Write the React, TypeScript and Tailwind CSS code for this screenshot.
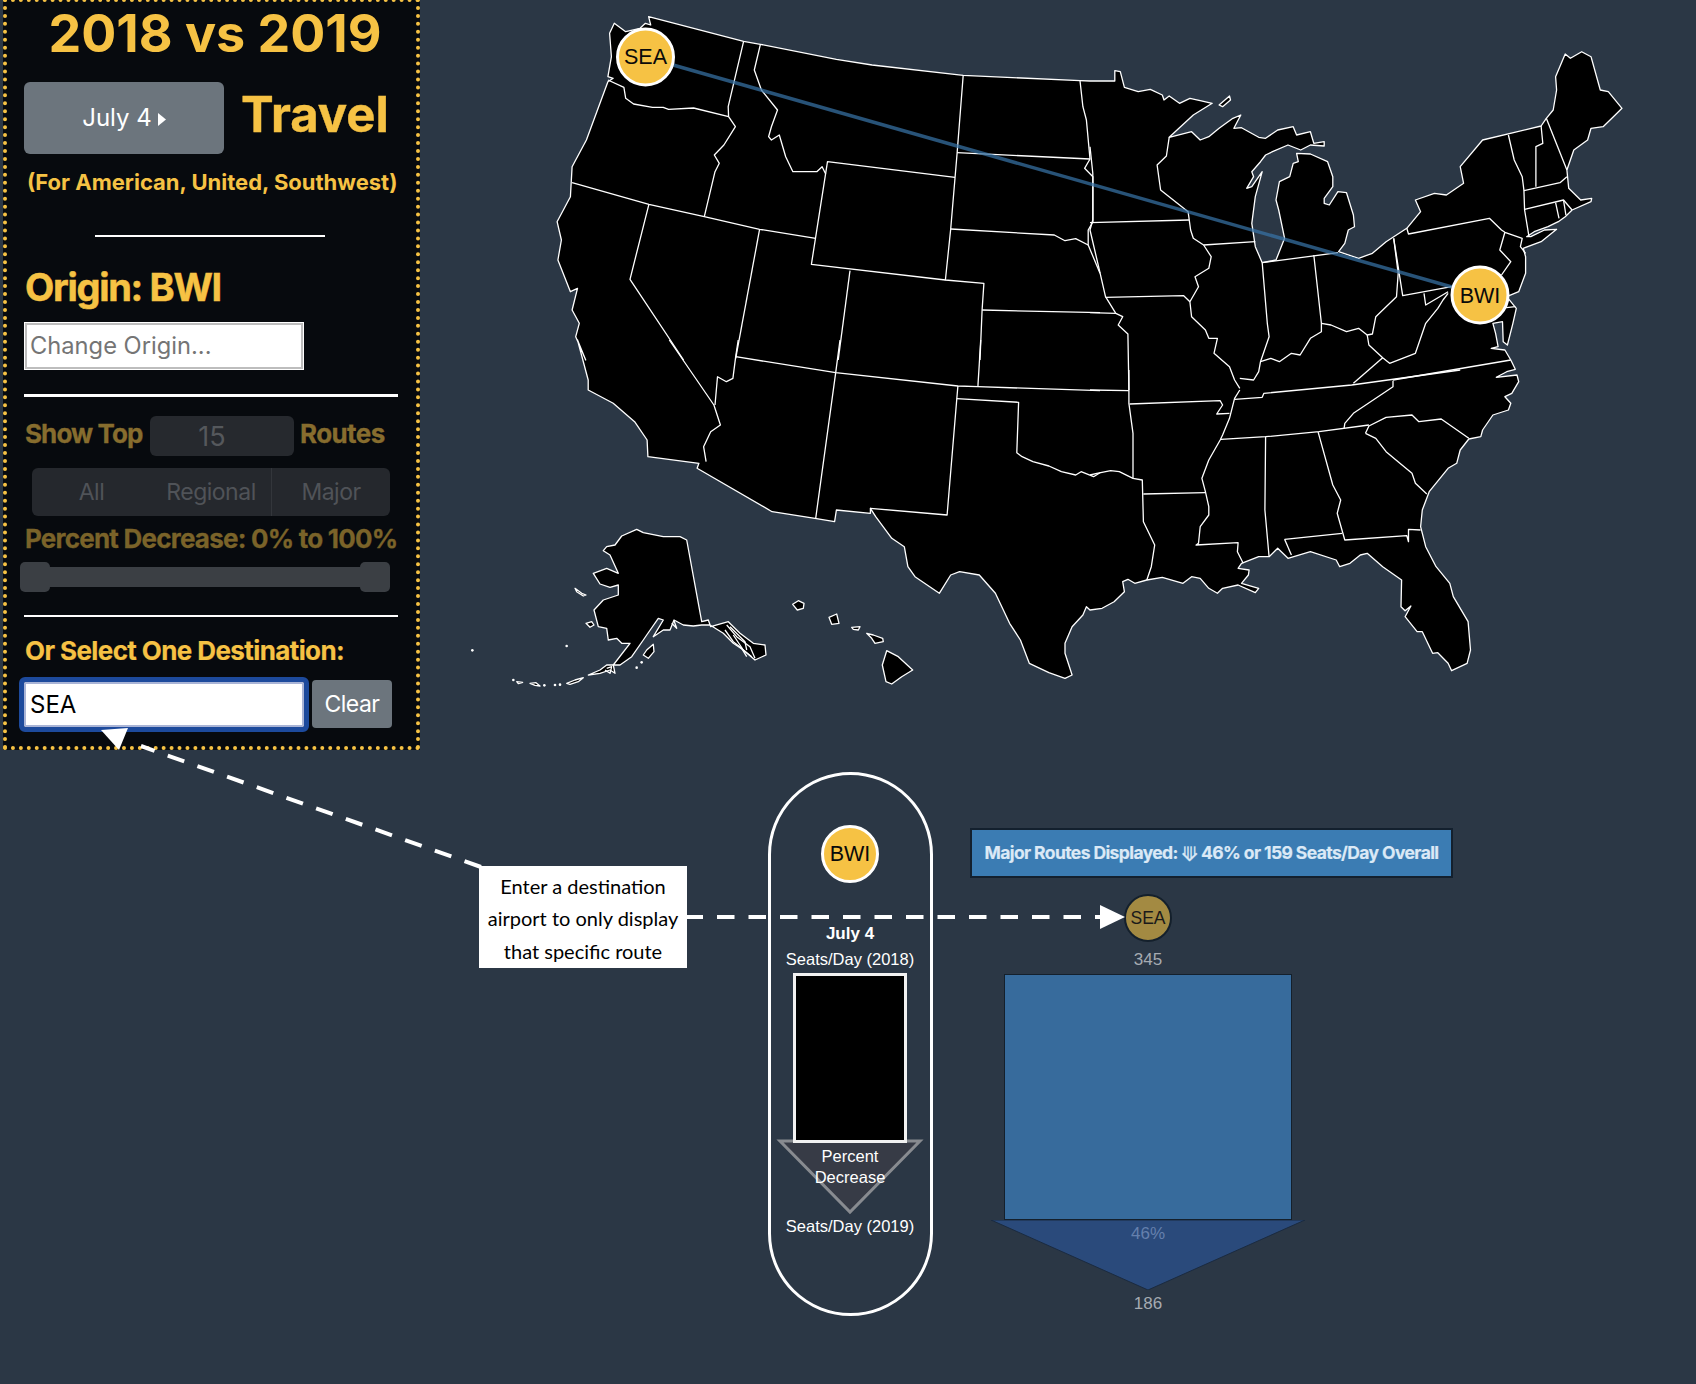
import React from "react";

type Pt = [number, number];
const conv = (s: string, x0: number, y0: number, sx: number, sy: number): string =>
  s
    .trim()
    .split(/\s+/)
    .map((p) => {
      const [x, y] = p.split(",").map(Number);
      return `${(x0 + x / sx).toFixed(1)},${(y0 + y / sy).toFixed(1)}`;
    })
    .join(" L");
const west = (s: string) => conv(s, 540, 0, 2.8, 3);
const south = (s: string) => conv(s, 540, 340, 2.8, 3);
const east = (s: string) => conv(s, 1090, 30, 2.904, 3);
const se = (s: string) => conv(s, 1090, 370, 2.904, 3);
const ak = (s: string) => conv(s, 450, 510, 3, 3);

const land =
  "M" +
  [
    west("304,50 570,124 617,133 830,178 930,195 1185,226 1512,242"),
    east(
      "0,153 72,153 72,122 88,125 100,172 140,185 175,178 210,195 215,210 230,198 260,220 290,205 320,212 355,220 300,255 230,322 295,305 320,330 345,320 375,295 415,265 438,255 418,295 440,293 490,322 510,325 545,300 590,290 600,315 640,305 650,340 680,335 680,348 640,345 612,360 575,345 530,365 510,375 495,395 470,425 475,440 455,475 470,470 500,425 480,500 470,580 480,650 500,698 540,690 565,625 548,540 540,510 550,455 580,440 590,400 605,395 600,370 640,372 690,395 705,440 705,470 680,505 680,520 695,525 720,485 745,488 765,555 768,590 750,600 740,640 722,665 780,685 820,670 860,635 880,622 920,595 960,545 945,510 1000,490 1035,495 1085,460 1075,410 1140,330 1310,288 1325,265 1345,240 1355,180 1352,140 1380,72 1395,85 1428,65 1455,80 1482,180 1505,185 1545,235 1520,260 1490,290 1455,295 1445,330 1405,360 1385,420 1390,475 1425,510 1457,505 1455,515 1400,540 1380,560 1360,575 1330,590 1290,605 1268,620 1280,620 1320,600 1355,598 1310,635 1258,655 1265,680 1265,730 1245,785 1210,800 1238,835 1228,880 1212,945 1200,935 1198,875 1170,880 1178,910 1185,950 1165,955 1205,960 1222,990 1235,1018 1210,1025 1180,1042"
    ),
    se(
      "1240,15 1245,35 1225,70 1205,80 1222,100 1215,120 1170,135 1140,180 1135,200 1100,207 1075,240 1065,280 1040,295 985,365 965,420 960,470 975,530 1005,590 1045,640 1055,680 1098,755 1105,840 1095,880 1050,902 1040,880 1010,848 995,850 965,785 950,785 915,740 932,708 915,722 903,710 905,630 850,590 805,550 785,555 755,580 725,590 715,570 640,545 575,565 545,535 520,560 490,560 440,580 430,595 462,600 460,615 440,640 490,655 480,668 430,645 385,655 370,670 345,655 320,625 295,620 270,640 210,622 165,630 130,640 110,628 95,635 100,665 70,695 35,715 0,720"
    ),
    south(
      "1530,800 1520,825 1490,860 1470,910 1470,940 1490,1005 1470,1015 1425,998 1370,970 1345,900 1315,850 1275,760 1230,705 1175,695 1150,705 1118,760 1050,710 1030,680 1020,620 985,595 940,530 925,505 925,520 830,510 825,545 770,535 650,515 440,385 445,370 302,350 300,300 265,245 205,190 135,150 135,120 105,0"
    ),
    west(
      "128,1080 100,1010 110,970 90,930 105,865 85,875 50,780 60,720 48,665 85,590 90,500 130,420 190,245 205,235 190,230 200,170 195,100 208,70 240,95 280,85 295,70 310,75 304,50"
    ),
  ].join(" L") +
  " Z";

const borders: string[] = [
  west("190,240 235,262 240,295 262,312 315,322 345,322 360,328 430,324 528,350"),
  west("570,124 527,320 528,350 547,380 515,435 488,465 502,490 490,515 460,650"),
  west("617,133 600,210 620,270 665,330 648,380 640,410 648,420 670,405 688,470 708,515 775,515 790,500 800,522"),
  west("90,548 305,613 460,650 615,688 772,715"),
  west("305,613 252,838 402,1080"),
  south("362,0 487,195 505,255 478,275 458,320 465,365"),
  west("615,688 548,1075"),
  south("555,0 548,50 540,115 522,125 497,110 490,195"),
  west("1162,532 805,485 760,793 1135,840"),
  west("1185,226 1168,460 1150,687 1135,840 1243,850 1238,930 1232,1080"),
  west("1168,458 1540,477"),
  west("1150,687 1440,705 1470,722 1500,716 1535,735"),
  west("1512,242 1520,320 1530,360 1540,477 1525,505 1548,530 1548,665 1535,690 1535,735 1568,820"),
  west("868,812 835,1080"),
  south("840,0 828,98 772,535"),
  west("1238,930 1568,938"),
  south("1234,0 1226,140"),
  south("548,50 828,98 1170,138 1226,140 1568,152"),
  south("1170,138 1167,176 1140,525 925,505"),
  south("1167,176 1340,187 1335,338 1350,350 1380,365 1425,378 1460,395 1500,405 1515,395 1550,410 1568,398"),
  se("0,315 20,310 60,302 85,305 125,325 152,330 155,455 188,525 178,590 165,630"),
  se("0,60 113,62"),
  se("113,0 113,100 125,190 125,325"),
  se("115,102 378,92 385,105 368,132 405,130"),
  se("155,372 335,368"),
  se("435,60 420,85 405,145 385,195 378,210 345,270 325,325 335,365 345,410 345,435 320,470 315,520 308,525 430,518 428,545 445,580"),
  se("420,88 500,82 505,70 760,45 1075,0"),
  east("880,1050 1222,990"),
  se("380,208 510,200 665,185 810,165"),
  se("880,32 880,50 830,85 765,130 740,160 738,175"),
  se("800,190 810,168 860,142 935,135 955,155 1020,147 1100,205"),
  se("800,190 830,205 860,245 900,280 935,310 945,340 978,372"),
  se("510,200 508,420 520,560"),
  se("662,185 705,345 728,390 718,430 740,510 920,497 925,515 925,478 960,480"),
  se("565,508 732,490"),
  se("565,508 585,555"),
  east("230,322 222,378 195,405 205,480 285,545 292,600 300,625 330,645 352,680 345,715 305,740 315,770 290,815 295,860 335,900 345,925 370,925 360,970 405,1010 420,1050 435,1075"),
  east("0,578 288,570"),
  east("330,645 480,635"),
  east("45,802 272,797 290,815"),
  east("0,350 8,430 8,570 0,600 25,710 45,800 75,850 95,860 82,885 110,912 113,1080"),
  east("0,848 75,850"),
  east("500,698 515,880 520,920 495,995 490,1025 475,1050 435,1045"),
  east("650,675 672,880 672,905 640,925 610,975 585,970 550,995 525,985 495,995"),
  east("500,698 720,668"),
  east("672,880 700,885 745,905 780,895 805,915 820,912 830,860 890,800 895,730 882,625"),
  east("805,915 810,945 850,983 870,1000 945,970 975,880 1010,835 1025,810 1040,790"),
  east("850,983 765,1060"),
  east("920,595 925,612 1160,565 1195,600 1205,607 1255,625 1250,650 1265,670"),
  east("1205,607 1190,660 1222,695 1195,735"),
  east("882,625 908,797 1050,770"),
  east("970,790 975,825 1040,785"),
  east("1215,315 1232,390 1255,440 1260,480 1262,540 1275,620"),
  east("1310,288 1315,340 1295,350 1295,470"),
  east("1325,265 1385,420"),
  east("1260,482 1365,458 1385,440"),
  east("1262,538 1375,510 1400,540"),
  east("1352,518 1362,565"),
  east("1375,510 1382,555"),
  east("1235,830 1190,835"),
];

const islands: string[] = [
  ak("710,90 755,335 775,330 782,350 835,335 870,370 910,400 945,405 948,435 915,450 880,420 850,400 820,370 780,345 755,345 730,348 700,345 672,330 660,360 640,360 610,380 640,330 625,325 590,375 580,390 545,440 510,465 490,465 540,400 515,400 500,385 475,390 470,355 445,350 432,300 460,270 505,255 505,225 480,232 450,222 430,190 470,175 505,190 480,135 460,122 470,110 495,105 515,78 560,58 580,68 640,80 690,80"),
  ak("580,435 590,420 610,403 612,425 595,445"),
  ak("415,495 450,480 470,465 490,465 495,490 480,480 450,490"),
  ak("408,340 425,335 432,345 420,352"),
  ak("375,235 395,250 408,255 400,258 380,245"),
  ak("350,520 375,510 400,503 385,515 360,523"),
  ak("240,520 258,518 270,528 255,526"),
  ak("200,515 218,517 205,521"),
  ak("1028,283 1045,272 1062,280 1060,295 1042,300"),
  ak("1137,322 1160,312 1167,340 1145,343"),
  ak("1205,352 1230,350 1225,360 1210,358"),
  ak("1250,370 1270,375 1298,385 1300,395 1275,400 1265,385"),
  ak("1310,422 1345,440 1388,480 1355,500 1325,522 1308,515 1297,465"),
  east("375,225 405,198 408,210 385,230"),
];
const innerLines: string[] = [
  ak("830,345 860,380 900,410 915,445"),
  ak("840,350 885,395 890,420"),
  ak("850,375 880,420 905,440"),
  ak("825,360 850,395 875,415 890,440"),
  ak("665,340 680,355 672,332"),
  ak("470,475 485,470 480,490 465,480"),
];
const dots: Pt[] = [
  [350, 408],
  [560, 473],
  [575, 457],
  [67, 421],
  [190, 510],
  [283, 526],
  [315, 525],
  [330, 524],
];

function UsMap() {
  return (
    <svg viewBox="420 0 1276 750" className="w-[1276px] h-[750px] shrink-0">
      <path d={land} fill="#000" stroke="#fff" strokeWidth="1.3" strokeLinejoin="round" />
      {islands.map((d, i) => (
        <path key={i} d={"M" + d + " Z"} fill="#000" stroke="#fff" strokeWidth="1.3" strokeLinejoin="round" />
      ))}
      {borders.concat(innerLines).map((d, i) => (
        <path key={i} d={"M" + d} fill="none" stroke="#fff" strokeWidth="1.3" strokeLinejoin="round" />
      ))}
      {dots.map(([x, y], i) => (
        <circle key={i} cx={450 + x / 3} cy={510 + y / 3} r="1.3" fill="#fff" />
      ))}
      <line x1="645" y1="57" x2="1480" y2="295" stroke="#3873a6" strokeOpacity="0.72" strokeWidth="3.5" />
      <circle cx="645.5" cy="57" r="28" fill="#f6c244" stroke="#fff" strokeWidth="3" />
      <text x="645.5" y="64" textAnchor="middle" fontSize="21.5" fill="#0a0a0a" fontFamily="'Liberation Sans', sans-serif">
        SEA
      </text>
      <circle cx="1480" cy="295" r="28" fill="#f6c244" stroke="#fff" strokeWidth="3" />
      <text x="1480" y="303" textAnchor="middle" fontSize="21.5" fill="#0a0a0a" fontFamily="'Liberation Sans', sans-serif">
        BWI
      </text>
    </svg>
  );
}

function Panel() {
  return (
    <div className="w-[417px] h-[752px] -mt-[2px] shrink-0 border-[4px] border-dotted border-[#f6c244] bg-[#070a0e] flex flex-col font-['Inter',sans-serif] text-[#f6c244]">
      <div className="h-[63px] flex items-center justify-center pl-[7px] text-[52px] font-bold leading-none whitespace-nowrap">2018 vs 2019</div>
      <div className="mt-[17px] h-[72px] flex items-center pl-[17px]">
        <div className="w-[200px] h-[72px] rounded-[6px] bg-[#6c757d] flex items-center justify-center gap-[6px] text-white text-[24px]">
          <span>July 4</span>
          <svg viewBox="0 0 8 13" className="w-[8px] h-[13px] mt-[2px]">
            <path d="M0 0 L8 6.5 L0 13 Z" fill="#fff" />
          </svg>
        </div>
        <span className="ml-[17px] mb-[8px] text-[49px] font-bold leading-none [-webkit-text-stroke:0.4px]">Travel</span>
      </div>
      <div className="mt-[13px] h-[30px] flex items-center pl-[20px] text-[22px] font-bold leading-none whitespace-nowrap">
        (For American, United, Southwest)
      </div>
      <div className="mt-[38px] ml-[88px] w-[230px] h-[2px] bg-white" />
      <div className="mt-[27px] h-[46px] flex items-center pl-[18px] text-[38px] font-bold leading-none tracking-[-1.3px] [-webkit-text-stroke:0.5px]">Origin: BWI</div>
      <input
        readOnly
        placeholder="Change Origin..."
        className="mt-[13px] ml-[18px] w-[278px] h-[46px] px-[3px] pb-[2px] bg-white border-2 border-[#bdbdbd] outline-1 outline-white text-[23.7px] text-black placeholder:text-[#757575]"
      />
      <div className="mt-[25px] ml-[17px] w-[374px] h-[3px] bg-white" />
      <div className="mt-[19px] h-[40px] flex items-center pl-[18px] text-[26px] font-bold text-[#876d2e] leading-none">
        <span className="w-[125px] whitespace-nowrap mb-[4px] tracking-[-0.9px] [-webkit-text-stroke:0.3px]">Show Top</span>
        <div className="w-[144px] h-[40px] rounded-[6px] bg-[#26292e] flex items-center justify-center pr-[20px] text-[#55585c] font-normal text-[27px]">15</div>
        <span className="ml-[6px] mb-[4px] tracking-[-0.6px] [-webkit-text-stroke:0.3px]">Routes</span>
      </div>
      <div className="mt-[12px] ml-[25px] w-[358px] h-[48px] rounded-[6px] bg-[#25282d] flex items-center text-[23px] tracking-[-0.5px] text-[#505358]">
        <span className="w-[119px] text-center">All</span>
        <span className="w-[120px] text-center">Regional</span>
        <span className="w-[119px] h-[48px] leading-[48px] text-center border-l border-[#33363b]">Major</span>
      </div>
      <div className="mt-[7px] h-[32px] flex items-center pl-[18px] text-[26px] font-bold text-[#7a6329] whitespace-nowrap leading-none tracking-[-0.78px] [-webkit-text-stroke:0.3px]">
        Percent Decrease: 0% to 100%
      </div>
      <div className="mt-[7px] ml-[13px] w-[370px] h-[30px] relative flex items-center">
        <div className="w-full h-[20px] bg-[#3b3f44] rounded-[3px]" />
        <div className="absolute left-0 top-0 w-[30px] h-[30px] rounded-[5px] bg-[#3b3f44]" />
        <div className="absolute right-0 top-0 w-[30px] h-[30px] rounded-[5px] bg-[#3b3f44]" />
      </div>
      <div className="mt-[23px] ml-[17px] w-[374px] h-[2px] bg-white" />
      <div className="mt-[18px] h-[32px] flex items-center pl-[18px] text-[26px] font-bold whitespace-nowrap leading-none tracking-[-0.6px] [-webkit-text-stroke:0.2px]">Or Select One Destination:</div>
      <div className="mt-[13px] h-[48px] flex items-center pl-[17px]">
        <input
          readOnly
          defaultValue="SEA"
          className="w-[280px] h-[45px] px-[4px] bg-white border-2 border-[#a9b4d6] outline-[5px] outline-[#1d4a9c] rounded-[1px] text-[24px] text-black"
        />
        <div className="ml-[8px] w-[80px] h-[48px] rounded-[4px] bg-[#6c757d] flex items-center justify-center text-white text-[23px] tracking-[-0.5px]">Clear</div>
      </div>
    </div>
  );
}

function Note() {
  return (
    <div className="ml-[479px] mt-[94px] w-[208px] h-[102px] shrink-0 bg-white text-black flex flex-col items-center justify-center pt-[3px] font-['Lato',sans-serif] text-[20px] leading-[32.5px] whitespace-nowrap">
      <span>Enter a destination</span>
      <span>airport to only display</span>
      <span>that specific route</span>
    </div>
  );
}

function Legend() {
  return (
    <div className="ml-[80.5px] w-[165px] h-[544px] shrink-0 rounded-[83px] border-[3px] border-white flex flex-col items-center text-white font-['Liberation_Sans',sans-serif] text-[16.5px] leading-[20px]">
      <div className="mt-[50px] w-[58px] h-[58px] rounded-full bg-[#f6c244] border-[3px] border-white flex items-center justify-center text-[21.5px] text-[#0a0a0a]">BWI</div>
      <div className="mt-[41px] font-bold text-[17px]">July 4</div>
      <div className="mt-[5px] whitespace-nowrap">Seats/Day (2018)</div>
      <div className="mt-[4px] w-[114px] h-[170px] relative z-10 bg-black border-[3px] border-[#f2f2f2] shrink-0" />
      <div className="relative w-[146px] h-[72px] -mt-[2px] shrink-0">
        <svg viewBox="0 0 146 72" className="w-[146px] h-[72px] overflow-visible">
          <path d="M3 0 L143 0 L73 71 Z" fill="#373b46" stroke="#888b90" strokeWidth="3" />
        </svg>
        <div className="absolute inset-x-0 top-[5px] flex flex-col items-center leading-[21px]">
          <span>Percent</span>
          <span>Decrease</span>
        </div>
      </div>
      <div className="mt-[3px] whitespace-nowrap">Seats/Day (2019)</div>
    </div>
  );
}

function Results() {
  return (
    <div className="ml-[37.5px] w-[483px] shrink-0 flex flex-col font-['Liberation_Sans',sans-serif]">
      <div className="mt-[56px] h-[50px] bg-[#3b7cb3] border-2 border-[#13202e] flex items-center justify-center pt-[1px] text-[#dbe9f6] text-[17.5px] font-bold font-['Inter',sans-serif] tracking-[-0.6px] whitespace-nowrap [-webkit-text-stroke:0.2px]">
        Major Routes Displayed:&nbsp;<span className="font-['DejaVu_Sans',sans-serif] font-normal text-[20px] leading-none">⟱</span>&nbsp;46% or 159 Seats/Day Overall
      </div>
      <div className="ml-[21px] w-[314px] flex flex-col items-center text-[17px] leading-[20px] text-[#a6abb2]">
        <div className="mt-[16px] w-[48px] h-[48px] rounded-full bg-[#a38a42] border-2 border-[#14202c] flex items-center justify-center text-[17.5px] text-[#1a1a1a]">SEA</div>
        <div className="mt-[8px]">345</div>
        <div className="mt-[4px] w-[288px] h-[246px] shrink-0 bg-[#376b9c] border border-[#14202c]" />
        <div className="relative w-[314px] h-[70px] shrink-0">
          <svg viewBox="0 0 314 70" className="w-[314px] h-[70px]">
            <path d="M0 0 L314 0 L157 70 Z" fill="#2a4a7b" stroke="#1b2b40" strokeWidth="1" />
          </svg>
          <div className="absolute inset-x-0 top-[4px] text-center text-[#6580ad]">46%</div>
        </div>
        <div className="mt-[4px]">186</div>
      </div>
    </div>
  );
}

export default function App() {
  return (
    <div className="relative w-[1696px] h-[1384px] overflow-hidden bg-[#2b3745]">
      <div className="flex h-[750px]">
        <div className="w-[3px] shrink-0" />
        <Panel />
        <UsMap />
      </div>
      <div className="flex mt-[22px]">
        <Note />
        <Legend />
        <Results />
      </div>
      <svg viewBox="0 0 1696 1384" className="absolute inset-0 w-[1696px] h-[1384px] pointer-events-none">
        <line x1="481" y1="867" x2="141" y2="746" stroke="#fff" strokeWidth="4" strokeDasharray="17.5 14" />
        <path d="M101 730 L128 728 L119 750 Z" fill="#fff" />
        <line x1="687" y1="917" x2="1102" y2="917" stroke="#fff" strokeWidth="4" strokeDasharray="17.5 14" strokeDashoffset="1.5" />
        <path d="M1100 905 L1125 917 L1100 929 Z" fill="#fff" />
      </svg>
    </div>
  );
}
